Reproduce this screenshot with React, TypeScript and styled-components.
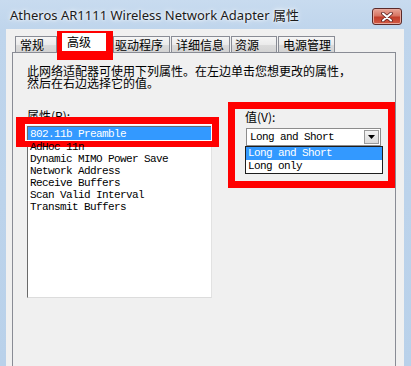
import styled, { createGlobalStyle } from 'styled-components'

const GlobalStyle = createGlobalStyle`
  html, body {
    margin: 0;
    padding: 0;
  }
  body {
    width: 411px;
    height: 366px;
    overflow: hidden;
    background: #bcd4ec;
  }
`

const Window = styled.div`
  display: flex;
  flex-direction: column;
  width: 411px;
  height: 366px;
  overflow: hidden;
  background: linear-gradient(180deg, #c8dbef 0px, #bfd5ec 30px, #b9d1ea 100%);
  font-family: "Noto Sans CJK SC", sans-serif;
`

const TitleBar = styled.div`
  display: flex;
  align-items: flex-start;
  height: 29px;
  flex-shrink: 0;
  padding: 0 9px 0 10px;
`

const Title = styled.div`
  flex: 1;
  margin-top: 7px;
  font-family: "Noto Sans", "Noto Sans CJK SC", sans-serif;
  font-size: 13px;
  line-height: 17px;
  color: #1b1b1b;
  text-shadow: 0 0 6px #ffffff, 0 0 3px #ffffff;
`

const CloseButton = styled.div`
  display: flex;
  align-items: center;
  justify-content: center;
  width: 28px;
  height: 15px;
  margin-top: 8px;
  border: 1px solid #5a2a2a;
  border-radius: 3px;
  box-shadow: inset 0 0 0 1px #e8a89c;
  background: linear-gradient(180deg, #e9a597 0%, #d77563 45%, #c23e2b 55%, #d25a44 100%);
`

const Client = styled.div`
  flex: 1;
  display: flex;
  flex-direction: column;
  margin: 0 7px 0 6px;
  background: #f0f0f0;
`

const TabRow = styled.div`
  display: flex;
  align-items: flex-end;
  height: 23px;
  flex-shrink: 0;
  padding-left: 9px;
`

const Tab = styled.div<{ w: number; pl: number; ml?: number }>`
  box-sizing: border-box;
  width: ${p => p.w}px;
  height: 16px;
  margin-left: ${p => p.ml ?? 0}px;
  padding: 1px 0 0 ${p => p.pl}px;
  border: 1px solid #898c95;
  border-bottom: none;
  background: linear-gradient(180deg, #f6f6f6 0%, #ebebeb 50%, #dcdcdc 51%, #d3d3d3 100%);
  font-size: 12px;
  line-height: 14px;
  color: #000;
  white-space: nowrap;
`

const ActiveTab = styled.div`
  position: relative;
  z-index: 1;
  box-sizing: border-box;
  width: 56px;
  height: 29px;
  margin-bottom: -8px;
  padding: 2px 0 0 5px;
  border-style: solid;
  border-color: #ff0000;
  border-width: 2px 7px 9px 5px;
  background: #ffffff;
  font-size: 12px;
  line-height: 14px;
  color: #000;
`

const Panel = styled.div`
  flex: 1;
  margin: 0 8px 0 6px;
  padding: 12px 0 0 14px;
  border: 1px solid #898c95;
  border-bottom: none;
  background: #f0f0f0;
`

const Description = styled.div`
  font-size: 12px;
  line-height: 12px;
  color: #000;
  white-space: nowrap;
`

const Columns = styled.div`
  display: flex;
  align-items: flex-start;
  gap: 16px;
  margin-top: 13px;
`

const PropertyColumn = styled.div`
  display: flex;
  flex-direction: column;
  gap: 4px;
  width: 186px;
  padding-top: 8px;
`

const Label = styled.div`
  font-size: 12px;
  line-height: 12px;
  color: #000;
  white-space: nowrap;
`

const ListBox = styled.div`
  box-sizing: border-box;
  height: 172px;
  border-style: solid;
  border-width: 1px;
  border-color: #6a6a6a #e2e2e2 #dcdcdc #6a6a6a;
  background: #ffffff;
`

const ListItem = styled.div<{ selected?: boolean }>`
  position: relative;
  height: ${p => (p.selected ? 14 : 12)}px;
  padding-left: 2px;
  font-family: "Liberation Mono", monospace;
  font-size: 11px;
  letter-spacing: -0.6px;
  line-height: ${p => (p.selected ? 14 : 12)}px;
  color: ${p => (p.selected ? '#ffffff' : '#000000')};
  background: ${p => (p.selected ? '#3399ff' : 'transparent')};
  white-space: nowrap;
`

/* red annotation frame drawn over the selected property */
const Marker = styled.div`
  position: absolute;
  top: -10px;
  left: -12px;
  right: -8px;
  bottom: -6px;
  border-style: solid;
  border-color: #ff0000;
  border-width: 7px 7px 6px 9px;
  box-shadow: inset 0 0 0 1px #ffffff;
`

const ValueBox = styled.div`
  box-sizing: border-box;
  display: flex;
  flex-direction: column;
  width: 167px;
  padding: 2px 5px 7px 10px;
  border: 7px solid #ff0000;
`

const Combo = styled.div`
  box-sizing: border-box;
  display: flex;
  align-items: center;
  width: 135px;
  height: 18px;
  margin: 5px 0 0 1px;
  padding: 0 1px 0 3px;
  border: 1px solid #8c8c8c;
  background: #ffffff;
`

const MonoText = styled.span`
  flex: 1;
  font-family: "Liberation Mono", monospace;
  font-size: 11px;
  letter-spacing: -0.6px;
  line-height: 12px;
  color: #000;
  white-space: nowrap;
`

const DropButton = styled.div`
  box-sizing: border-box;
  display: flex;
  align-items: center;
  justify-content: center;
  width: 15px;
  height: 14px;
  border: 1px solid #9a9a9a;
  background: linear-gradient(180deg, #f4f4f4, #dadada);
`

const DropList = styled.div`
  box-sizing: border-box;
  width: 138px;
  border: 1px solid #1e1e1e;
  background: #ffffff;
`

const DropItem = styled.div<{ selected?: boolean }>`
  height: 13px;
  padding-left: 2px;
  font-family: "Liberation Mono", monospace;
  font-size: 11px;
  letter-spacing: -0.6px;
  line-height: 13px;
  color: ${p => (p.selected ? '#ffffff' : '#000000')};
  background: ${p => (p.selected ? '#3399ff' : 'transparent')};
  white-space: nowrap;
`

const properties = [
  'AdHoc 11n',
  'Dynamic MIMO Power Save',
  'Network Address',
  'Receive Buffers',
  'Scan Valid Interval',
  'Transmit Buffers',
]

export default function App() {
  return (
    <>
      <GlobalStyle />
      <Window>
        <TitleBar>
          <Title>Atheros AR1111 Wireless Network Adapter 属性</Title>
          <CloseButton>
            <svg width="12" height="10" viewBox="0 0 12 10">
              <path d="M2 1.5 L10 8.5 M10 1.5 L2 8.5" stroke="#5a2020" strokeWidth="3.6" strokeLinecap="round" />
              <path d="M2 1.5 L10 8.5 M10 1.5 L2 8.5" stroke="#ffffff" strokeWidth="2" strokeLinecap="round" />
            </svg>
          </CloseButton>
        </TitleBar>
        <Client>
          <TabRow>
            <Tab w={42} pl={4}>常规</Tab>
            <ActiveTab>高级</ActiveTab>
            <Tab w={57} pl={1}>驱动程序</Tab>
            <Tab w={59} pl={4} ml={1}>详细信息</Tab>
            <Tab w={46} pl={3} ml={1}>资源</Tab>
            <Tab w={57} pl={4} ml={1}>电源管理</Tab>
          </TabRow>
          <Panel>
            <Description>
              <div>此网络适配器可使用下列属性。在左边单击您想更改的属性，</div>
              <div>然后在右边选择它的值。</div>
            </Description>
            <Columns>
              <PropertyColumn>
                <Label>属性(P):</Label>
                <ListBox>
                  <ListItem selected>
                    802.11b Preamble
                    <Marker />
                  </ListItem>
                  {properties.map(p => (
                    <ListItem key={p}>{p}</ListItem>
                  ))}
                </ListBox>
              </PropertyColumn>
              <ValueBox>
                <Label>值(V):</Label>
                <Combo>
                  <MonoText>Long and Short</MonoText>
                  <DropButton>
                    <svg width="7" height="4" viewBox="0 0 7 4">
                      <path d="M0 0 H7 L3.5 4 Z" fill="#000" />
                    </svg>
                  </DropButton>
                </Combo>
                <DropList>
                  <DropItem selected>Long and Short</DropItem>
                  <DropItem>Long only</DropItem>
                </DropList>
              </ValueBox>
            </Columns>
          </Panel>
        </Client>
      </Window>
    </>
  )
}
